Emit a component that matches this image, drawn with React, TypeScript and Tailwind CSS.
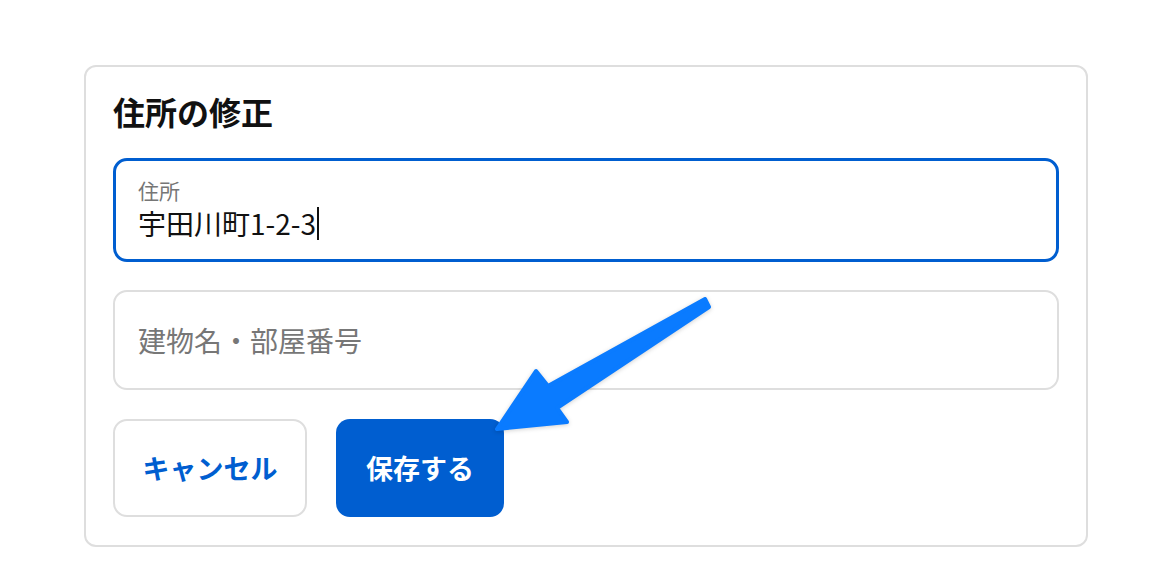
const jp = "font-['Noto_Sans_CJK_JP','Noto_Sans',sans-serif]";

function Arrow() {
  // 保存ボタンを指す矢印（注釈）
  return (
    <svg
      className="pointer-events-none absolute left-0 top-0 drop-shadow-[0_1px_2px_rgba(0,0,0,0.18)]"
      width="1158"
      height="562"
      viewBox="0 0 1158 562"
    >
      <path
        d="M705 299 L548 386 L536 371 L497 429 L567 422 L557 408 L709 307 Z"
        fill="#0a7bff"
        stroke="#0a7bff"
        strokeWidth="4"
        strokeLinejoin="round"
      />
    </svg>
  );
}

export default function App() {
  return (
    <div className={`relative h-[562px] w-[1158px] bg-white ${jp}`}>
      <div className="ml-[84px] pt-[65px]">
        <div className="flex w-[1004px] flex-col rounded-[12px] border-2 border-[#dedede] bg-white px-[27px] pb-[28px] pt-[27px]">
          <h1 className="mt-[1px] text-[32px] font-bold leading-none text-[#111]">住所の修正</h1>

          <div className="mt-[31px] flex h-[104px] flex-col rounded-[14px] border-[3px] border-[#005ed0] px-[22px] pt-[15px]">
            <span className="text-[21px] leading-[28px] text-[#767676]">住所</span>
            <div className="flex items-center text-[28px] leading-[38px] text-[#111]">
              <span>宇田川町1-2-3</span>
              <span className="ml-[1px] h-[33px] w-[2px] bg-[#111]" />
            </div>
          </div>

          <div className="mt-[28px] flex h-[100px] items-center rounded-[14px] border-2 border-[#dedede] px-[23px]">
            <span className="text-[28px] text-[#777]">建物名・部屋番号</span>
          </div>

          <div className="mt-[29px] flex gap-[29px]">
            <button className="flex h-[98px] w-[194px] items-center justify-center rounded-[14px] border-2 border-[#dedede] bg-white text-[27px] font-bold text-[#005ed0]">
              キャンセル
            </button>
            <button className="flex h-[98px] w-[168px] items-center justify-center rounded-[14px] bg-[#005ed0] text-[27px] font-bold text-white">
              保存する
            </button>
          </div>
        </div>
      </div>
      <Arrow />
    </div>
  );
}
